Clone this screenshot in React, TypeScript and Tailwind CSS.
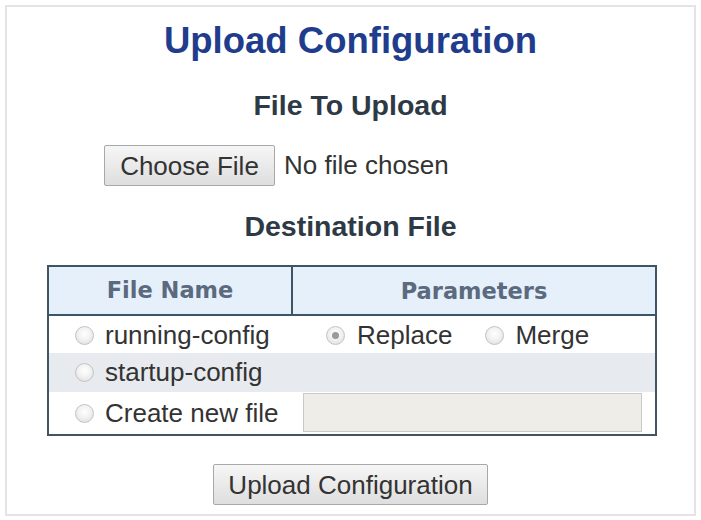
import React from 'react';

function Radio({ checked = false }: { checked?: boolean }) {
  return (
    <span className="w-[19px] h-[19px] rounded-full border border-[#c4c4c4] bg-[radial-gradient(circle_at_50%_40%,#ffffff_0%,#f2f2f2_45%,#d9d9d9_100%)] flex items-center justify-center flex-shrink-0">
      {checked && <span className="w-[7px] h-[7px] rounded-full bg-[#9a9a9a]" />}
    </span>
  );
}

function Button({ children, className = '' }: { children: React.ReactNode; className?: string }) {
  return (
    <button
      type="button"
      className={`h-[41px] border border-[#a8a8a8] rounded-[2px] bg-[linear-gradient(#f6f6f6,#dedede)] text-[#333] text-[26px] leading-none ${className}`}
    >
      {children}
    </button>
  );
}

export default function App() {
  return (
    <div className="w-[701px] h-[520px] bg-white pt-[5px] pl-[5px] font-['Liberation_Sans',Arial,sans-serif]">
      <div className="w-[691px] h-[511px] border-2 border-[#e4e4e4] flex flex-col items-center">
        <h1 className="mt-[14px] h-[40px] leading-[40px] text-[36.5px] font-bold text-[#1f3d8c]">
          Upload Configuration
        </h1>
        <h2 className="mt-[28px] h-[32px] leading-[32px] text-[28.5px] font-bold text-[#2d3a45]">
          File To Upload
        </h2>
        <div className="mt-[24px] w-full flex items-center pl-[97px]">
          <Button className="w-[171px]">Choose File</Button>
          <span className="ml-[9px] text-[26px] text-[#333]">No file chosen</span>
        </div>
        <h2 className="mt-[24px] h-[32px] leading-[32px] text-[28.5px] font-bold text-[#2d3a45]">
          Destination File
        </h2>
        <div className="mt-[23px] ml-[3px] w-[610px] border-2 border-[#3e5566] text-[26px] text-[#333]">
          <div className="grid grid-cols-[244px_1fr] h-[49px] bg-[#e6f0fb] border-b-2 border-[#3e5566]">
            <div className="border-r-2 border-[#3e5566] flex items-center justify-center font-['DejaVu_Sans',Verdana,sans-serif] font-bold text-[22.5px] text-[#5b6a7e]">
              File Name
            </div>
            <div className="flex items-center justify-center pt-[2px] font-['DejaVu_Sans',Verdana,sans-serif] font-bold text-[22.5px] text-[#5b6a7e]">
              Parameters
            </div>
          </div>
          <div className="grid grid-cols-[244px_1fr] h-[37px]">
            <div className="flex items-center pl-[26px] gap-[11px]">
              <Radio />
              <span>running-config</span>
            </div>
            <div className="flex items-center pl-[33px]">
              <Radio checked />
              <span className="ml-[12px]">Replace</span>
              <span className="ml-[33px]">
                <Radio />
              </span>
              <span className="ml-[11px]">Merge</span>
            </div>
          </div>
          <div className="h-[39px] bg-[#e7eaee] flex items-center pl-[26px] gap-[11px]">
            <Radio />
            <span>startup-config</span>
          </div>
          <div className="grid grid-cols-[244px_1fr] h-[42px]">
            <div className="flex items-center pl-[26px] gap-[11px]">
              <Radio />
              <span>Create new file</span>
            </div>
            <div className="flex items-start pl-[10px] pr-[13px] pt-[1px]">
              <input
                type="text"
                className="w-full h-[39px] bg-[#efede7] border border-[#c9c9c9] outline-none"
              />
            </div>
          </div>
        </div>
        <Button className="mt-[28px] w-[275px]">Upload Configuration</Button>
      </div>
    </div>
  );
}
